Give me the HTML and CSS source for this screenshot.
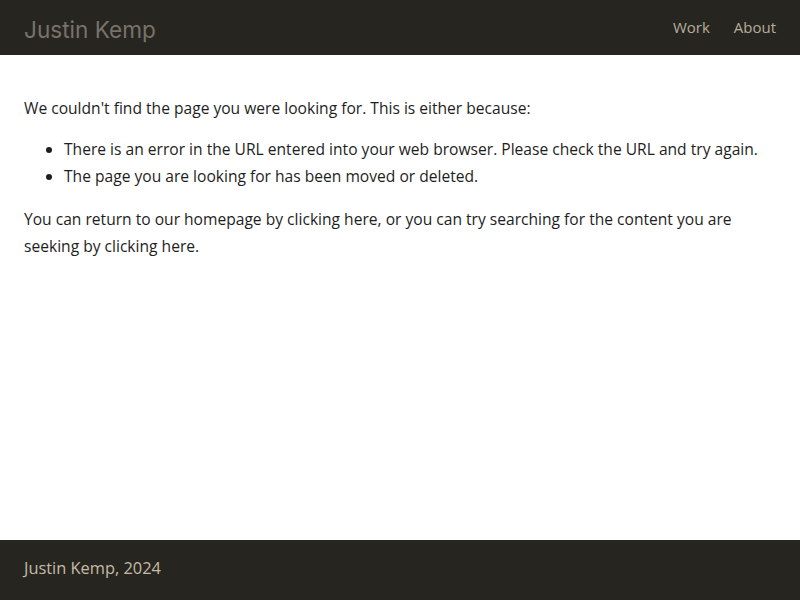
FILE: index.html
```html
<!DOCTYPE html>
<html lang="en">
<head>
<meta charset="utf-8">
<title>Justin Kemp</title>
<link rel="stylesheet" href="styles.css">
</head>
<body>
<div class="page">
  <header class="header">
    <div class="site-title">Justin Kemp</div>
    <nav class="nav">
      <a class="nav-link" href="#">Work</a>
      <a class="nav-link" href="#">About</a>
    </nav>
  </header>
  <main class="content">
    <p class="text">We couldn't find the page you were looking for. This is either because:</p>
    <ul class="list">
      <li>There is an error in the URL entered into your web browser. Please check the URL and try again.</li>
      <li>The page you are looking for has been moved or deleted.</li>
    </ul>
    <p class="text">You can return to our homepage by <a class="link" href="#">clicking here</a>, or you can try searching for the content you are seeking by <a class="link" href="#">clicking here</a>.</p>
  </main>
  <footer class="footer">
    <div class="footer-text">Justin Kemp, 2024</div>
  </footer>
</div>
</body>
</html>
```
FILE: styles.css
```css
html, body {
  margin: 0;
  padding: 0;
  height: 100%;
}
body {
  font-family: "Open Sans", sans-serif;
  background: #ffffff;
  color: #1e1e1e;
}
.page {
  display: flex;
  flex-direction: column;
  min-height: 100vh;
}
.header {
  height: 55px;
  background: #272520;
  display: flex;
  align-items: center;
  justify-content: space-between;
  padding: 0 24px;
  box-sizing: border-box;
}
.site-title {
  font-family: Inter, sans-serif;
  font-size: 22.6px;
  color: #77726a;
  padding-top: 4px;
}
.nav {
  display: flex;
  gap: 24px;
  padding-bottom: 2px;
}
.nav-link {
  color: #b5ad9c;
  text-decoration: none;
  font-size: 15px;
}
.content {
  flex: 1;
  padding: 40px 24px 0;
  font-size: 15.6px;
  line-height: 27px;
}
.text {
  margin: 0 0 14px;
}
.list {
  margin: 0 0 16px;
  padding-left: 40px;
}
.link {
  color: inherit;
  text-decoration: none;
}
.footer {
  height: 60px;
  background: #272520;
  display: flex;
  align-items: center;
  padding: 0 24px 5px;
  box-sizing: border-box;
}
.footer-text {
  color: #c5bba7;
  font-size: 16.4px;
}
```
